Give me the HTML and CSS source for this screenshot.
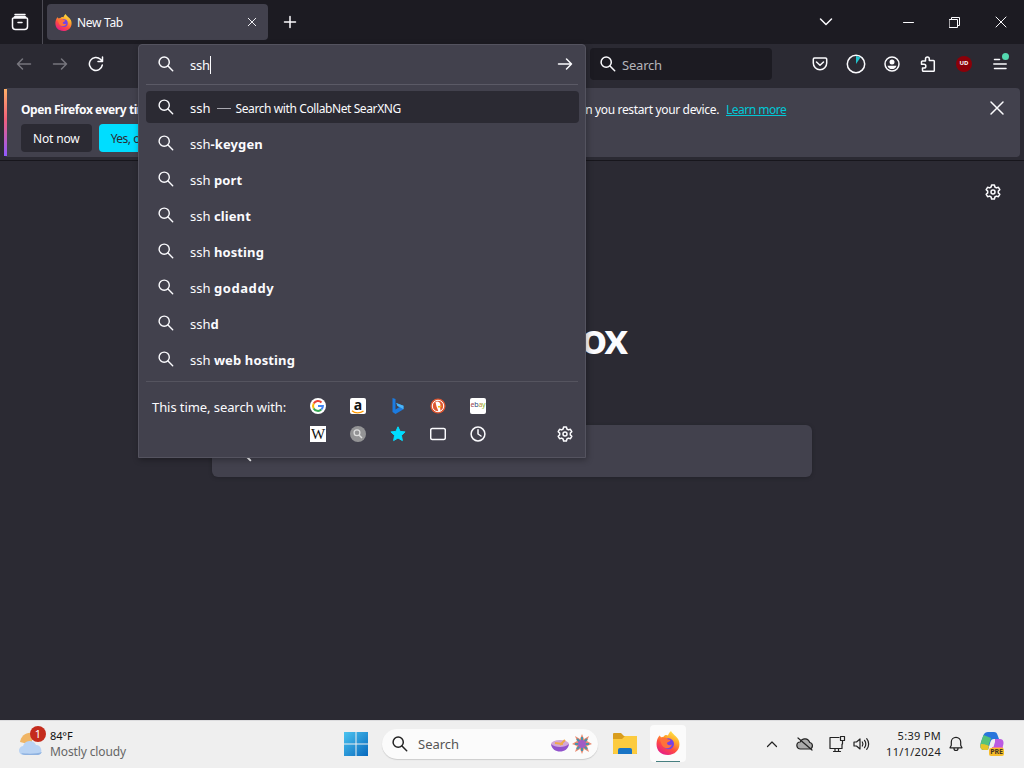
FILE: index.html
```html
<!DOCTYPE html>
<html lang="en">
<head>
    <meta charset="utf-8">
    <title>New Tab</title>
    <link rel="stylesheet" href="styles.css">
</head>
<body>
    <svg class="defs" width="0" height="0">
        <symbol id="search" viewBox="0 0 16 16"><circle cx="6.2" cy="6.2" r="5.100"/><path d="M10 10l4.700 4.700"/></symbol>
        <symbol id="close" viewBox="0 0 16 16"><path d="M2 2l12 12M14 2L2 14"/></symbol>
        <symbol id="arrow" viewBox="0 0 16 16"><path d="M1.500 8h13M9.500 3L14.500 8l-5 5"/></symbol>
        <symbol id="gear" viewBox="0 0 16 16"><path d="M6.600 1h2.800l.5 2 1.500.9 2-.6 1.400 2.400L13.300 7.100v1.800l1.500 1.400-1.400 2.400-2-.6-1.500.9-.5 2H6.600l-.5-2-1.500-.9-2 .6-1.400-2.400 1.500-1.400V7.100L1.200 5.700l1.400-2.400 2 .6L6.100 3z"/><circle cx="8" cy="8" r="2"/></symbol>
        <symbol id="firefox" viewBox="0 0 24 24">
            <linearGradient id="flame" x1=".8" y1="0" x2=".25" y2="1">
                <stop offset="0" stop-color="#fff04a"/><stop offset=".35" stop-color="#ffa52b"/><stop offset=".65" stop-color="#ff4a43"/><stop offset="1" stop-color="#e4198b"/>
            </linearGradient>
            <path fill="url(#flame)" stroke="none" d="M15 0c1 3 6 5 7.700 9.200C25.500 17 20 24 12 24S-.4 18.500.7 11c.3-3 1.500-5 3-6.500L5 6.200l2.500-.4C9 3.500 11 4 12 4.500 12.500 2.800 13.500 1 15 0z"/>
            <circle cx="12.500" cy="12.800" r="5.500" fill="#7542e5" stroke="none"/>
            <path fill="#ff7139" stroke="none" d="M4 9c2-3 6-2.500 7.500-.8l3 .8c-.5 2-3 1.800-3.500 3 0 2 2.500 3 5 1.500-1 4-6 5-9 2C5 13.500 5 11 4 9z"/>
        </symbol>
    </svg>

    <div class="tabbar">
        <div class="tab-view">
            <svg class="icon" width="18" height="18" viewBox="0 0 18 18"><path d="M4 1.500h10M2.500 5h13a1 1 0 0 1 1 1v7.500a3 3 0 0 1-3 3h-9a3 3 0 0 1-3-3V6a1 1 0 0 1 1-1zM3 4.500l1-1h10l1 1M7 9.500h4"/></svg>
        </div>
        <div class="tab">
            <svg width="17" height="17"><use href="#firefox"/></svg>
            <span class="tab-title">New Tab</span>
            <svg class="icon" width="10" height="10"><use href="#close"/></svg>
        </div>
        <svg class="icon new-tab" width="14" height="14" viewBox="0 0 14 14"><path d="M7 1.500v11M1.500 7h11"/></svg>
        <div class="window-buttons">
            <svg class="icon" width="14" height="10" viewBox="0 0 14 10"><path d="M1.500 2L7 7.500 12.500 2"/></svg>
            <svg class="icon thin minimize" width="11" height="11" viewBox="0 0 11 11"><path d="M.5 5.500h10"/></svg>
            <svg class="icon thin" width="11" height="11" viewBox="0 0 11 11"><path d="M.5 2.500h8v8h-8zM2.500 2.500v-2h8v8h-2"/></svg>
            <svg class="icon thin" width="12" height="12" viewBox="0 0 12 12"><path d="M1 1l10 10M11 1L1 11"/></svg>
        </div>
    </div>

    <div class="navbar">
        <svg class="icon disabled back" width="16" height="16"><use href="#arrow"/></svg>
        <svg class="icon disabled" width="16" height="16"><use href="#arrow"/></svg>
        <svg class="icon" width="16" height="16" viewBox="0 0 16 16"><path d="M14.300 9A6.500 6.500 0 1 1 12.500 3.300L14 5M14.500 1v4.500H10"/></svg>
        <div class="searchbar">
            <svg class="icon" width="16" height="16"><use href="#search"/></svg>
            <span>Search</span>
        </div>
        <div class="toolbar">
            <svg class="icon" width="16" height="16" viewBox="0 0 16 16"><path d="M2.500 2h11a1.200 1.200 0 0 1 1.200 1.200V7a6.700 6.700 0 0 1-13.400 0V3.200A1.200 1.200 0 0 1 2.500 2zM4.500 6L8 9.300 11.500 6"/></svg>
            <svg class="icon" width="20" height="20" viewBox="0 0 20 20"><circle cx="10" cy="10" r="8.700"/><path class="teal" d="M10 10V2a8 8 0 0 1 4.500 1.500z"/></svg>
            <svg class="icon" width="16" height="16" viewBox="0 0 16 16"><circle cx="8" cy="8" r="7"/><circle class="solid" cx="8" cy="6" r="2.500"/><path class="solid" d="M3.500 9.700h9c-1 4.500-8 4.500-9 0z"/></svg>
            <svg class="icon" width="16" height="16" viewBox="0 0 16 16"><path d="M5.500 4V3a1.900 1.900 0 0 1 3.800 0v1.500h4.200a.8.800 0 0 1 .8.800v9.200a.8.800 0 0 1-.8.800h-10a1 1 0 0 1-1-1V12H4a1.800 1.800 0 0 0 0-3.700H1.500V6a1 1 0 0 1 1-1h3z"/></svg>
            <span class="ublock">UD</span>
            <span class="menu">
                <svg class="icon" width="14" height="14" viewBox="0 0 14 14"><path d="M1.500 2.500h5M.8 7h12.400M1.500 11.500h11.500"/></svg>
                <span class="menu-badge"></span>
            </span>
        </div>

        <div class="urlbar">
            <div class="urlbar-input">
                <svg class="icon" width="16" height="16"><use href="#search"/></svg>
                <span class="typed">ssh</span>
                <svg class="icon go" width="16" height="16"><use href="#arrow"/></svg>
            </div>
            <div class="results">
                <div class="result selected"><svg class="icon" width="16" height="16"><use href="#search"/></svg><span>ssh</span><span class="engine"><i class="dash"></i>Search with CollabNet SearXNG</span></div>
                <div class="result"><svg class="icon" width="16" height="16"><use href="#search"/></svg><span>ssh<b>-keygen</b></span></div>
                <div class="result"><svg class="icon" width="16" height="16"><use href="#search"/></svg><span>ssh <b>port</b></span></div>
                <div class="result"><svg class="icon" width="16" height="16"><use href="#search"/></svg><span>ssh <b>client</b></span></div>
                <div class="result"><svg class="icon" width="16" height="16"><use href="#search"/></svg><span>ssh <b>hosting</b></span></div>
                <div class="result"><svg class="icon" width="16" height="16"><use href="#search"/></svg><span>ssh <b class="wide">godaddy</b></span></div>
                <div class="result"><svg class="icon" width="16" height="16"><use href="#search"/></svg><span>ssh<b>d</b></span></div>
                <div class="result"><svg class="icon" width="16" height="16"><use href="#search"/></svg><span>ssh <b>web hosting</b></span></div>
            </div>
            <div class="one-offs">
                <span class="one-offs-label">This time, search with:</span>
                <div class="engines">
                    <svg width="16" height="16" viewBox="0 0 16 16"><circle cx="8" cy="8" r="8" fill="#fff"/><g fill="none" stroke-width="2"><path stroke="#ea4335" d="M3.700 5.600A4.900 4.900 0 0 1 11.500 4.500"/><path stroke="#fbbc05" d="M3.700 5.600a4.900 4.900 0 0 0 0 4.800"/><path stroke="#34a853" d="M3.700 10.400a4.900 4.900 0 0 0 7.600 1.200"/><path stroke="#4285f4" d="M11.300 11.600A4.900 4.900 0 0 0 12.900 8H8"/></g></svg>
                    <span class="engine-tile amazon">a<svg width="14" height="4" viewBox="0 0 14 4"><path d="M1 .8c3 2.700 8 2.700 11.500.2" fill="none" stroke="#f90" stroke-width="1.400"/></svg></span>
                    <svg width="16" height="16" viewBox="0 0 16 16"><path fill="#1b7be0" d="M2.500 0l3 1v10.500L9.500 9 7.500 8 6.200 5l7.300 2.700v3.500L5.500 16l-3-2z"/><path fill="#4bb5f5" d="M6.200 5l7.300 2.700v3.500L9.500 9l-2-1z"/></svg>
                    <svg width="16" height="16" viewBox="0 0 16 16"><circle cx="8" cy="8" r="7.600" fill="#de5833"/><circle cx="8" cy="8" r="5.700" fill="none" stroke="#fff" stroke-width="1"/><path fill="#fff" d="M5.500 4c2-1.500 5 0 5 3l-.5 1.500.5 4.500-2 .5-2-5z"/><path fill="#fdb913" d="M8 8l4-.2-1.500 1.700H8z"/></svg>
                    <span class="engine-tile ebay"><i class="r">e</i><i class="b">b</i><i class="y">a</i><i class="g">y</i></span>
                    <span class="engine-tile wiki">W</span>
                    <svg width="16" height="16" viewBox="0 0 16 16"><circle cx="8" cy="8" r="8" fill="#939395"/><circle cx="7" cy="6.800" r="2.900" fill="none" stroke="#ddd" stroke-width="1.300"/><path d="M9 9l3 3" stroke="#ddd" stroke-width="1.500"/></svg>
                    <svg width="16" height="16" viewBox="0 0 16 16"><path fill="#00ddff" stroke="#00ddff" stroke-linejoin="round" d="M8 .8l2.100 4.600 5 .5-3.700 3.500 1 5.200L8 12l-4.400 2.600 1-5.200L.9 5.900l5-.5z"/></svg>
                    <svg class="icon" width="16" height="16" viewBox="0 0 16 16"><rect x=".7" y="2.500" width="14.600" height="11" rx="1.500"/></svg>
                    <svg class="icon" width="16" height="16" viewBox="0 0 16 16"><circle cx="8" cy="8" r="6.900"/><path d="M8 3.800V8l3 2"/></svg>
                </div>
                <svg class="icon settings" width="16" height="16"><use href="#gear"/></svg>
            </div>
        </div>
    </div>

    <div class="notification">
        <div class="notification-text">
            <b>Open Firefox every time you restart your computer?</b>
            <span>Open automatically when you restart your device.</span>
            <a class="learn-more">Learn more</a>
            <svg class="icon notification-close" width="16" height="16"><use href="#close"/></svg>
        </div>
        <div class="notification-buttons">
            <span class="button">Not now</span>
            <span class="button primary">Yes, open Firefox</span>
        </div>
    </div>

    <div class="page">
        <svg class="icon page-settings" width="16" height="16"><use href="#gear"/></svg>
        <div class="wordmark">Firefox</div>
        <div class="page-search"><svg class="icon" width="20" height="20"><use href="#search"/></svg></div>
    </div>

    <div class="taskbar">
        <div class="weather">
            <span class="weather-icon">
                <svg width="26" height="30" viewBox="0 0 26 30"><path d="M2 14C3 8 8 4 14 5v12z" fill="#f0b565"/><path d="M6 27a4.500 4.500 0 0 1-1-9 7 7 0 0 1 13-1 5.500 5.500 0 0 1 3 10z" fill="#b9d3f3"/><path d="M3 25a5 5 0 0 0 4 2h13a5 5 0 0 0 4-3c-5 2-15 2-21 1z" fill="#8fb2e0"/></svg>
                <span class="weather-badge">1</span>
            </span>
            <div class="weather-text"><span class="temp">84°F</span><span>Mostly cloudy</span></div>
        </div>
        <div class="taskbar-apps">
            <svg width="24" height="24" viewBox="0 0 24 24">
                <linearGradient id="win" x1="0" y1="0" x2="1" y2="1"><stop offset="0" stop-color="#4cc4f0"/><stop offset="1" stop-color="#0768bd"/></linearGradient>
                <path fill="url(#win)" d="M0 0h11.500v11.500H0zM12.500 0H24v11.500H12.500zM0 12.500h11.500V24H0zM12.500 12.500H24V24H12.500z"/>
            </svg>
            <div class="taskbar-search">
                <svg class="icon" width="16" height="16"><use href="#search"/></svg>
                <span>Search</span>
                <svg class="doodle" width="42" height="22" viewBox="0 0 42 22">
                    <ellipse cx="10" cy="11" rx="9" ry="4" fill="#d3a8d8"/><path d="M1 11c1 10 17 10 18 0-4 4-14 4-18 0z" fill="#9152cc"/><path d="M5 10l8 1M10 12l5-5" stroke="#efaa4c" stroke-width="2"/>
                    <path d="M32 1l2 5 5-3-2 5 5 3-5 2 2 6-5-3-2 5-2-5-5 3 2-6-5-2 5-3-2-5 5 3z" fill="#e98a70"/><path d="M32 4v14M25 11h14M27 6l10 10M37 6L27 16" stroke="#4a93a8" stroke-width="2"/><circle cx="32" cy="11" r="4" fill="#a05cc4"/>
                </svg>
            </div>
            <svg class="explorer" width="24" height="22" viewBox="0 0 24 22"><path d="M0 1a1 1 0 0 1 1-1h7l3 3h12a1 1 0 0 1 1 1v17H0z" fill="#d99d1e"/><path d="M0 6h9l3-3h12v17a1 1 0 0 1-1 1H1a1 1 0 0 1-1-1z" fill="#fccb3f"/><path d="M5 21v-4a2 2 0 0 1 2-2h10a2 2 0 0 1 2 2v4z" fill="#1974c5"/></svg>
            <span class="running"><svg width="24" height="24"><use href="#firefox"/></svg></span>
        </div>
        <div class="tray">
            <svg class="icon" width="12" height="12" viewBox="0 0 12 12"><path d="M1.500 8.500L6 4l4.500 4.500"/></svg>
            <svg class="icon cloud" width="18" height="16" viewBox="0 0 18 16"><path fill="#aaa" d="M4.500 13a3.500 3.500 0 0 1-.3-7 5 5 0 0 1 9.500.5 3.300 3.300 0 0 1 0 6.500z"/><path d="M2 2l14 12"/></svg>
            <svg class="icon network" width="18" height="18" viewBox="0 0 18 18"><path d="M11 2.500H2v11h12V9M5.500 16.500h7M7 13.500v3M10.500 13.500v3M12.500 1.500h4v4h-4zM14.500 5.500V9"/></svg>
            <svg class="icon sound" width="17" height="14" viewBox="0 0 17 14"><path d="M1 5h2.500L7 2v10L3.500 9H1zM9.300 5c.8 1.200.8 2.800 0 4M11.500 3.300c1.700 2 1.700 5.400 0 7.400M13.700 1.700c2.600 3 2.600 7.600 0 10.600"/></svg>
            <div class="clock"><span>5:39 PM</span><span>11/1/2024</span></div>
            <svg class="icon bell" width="14" height="16" viewBox="0 0 14 16"><path d="M1 11.800l1.300-2.500V6a4.700 4.700 0 0 1 9.400 0v3.300L13 11.800zM5 12.500a2 2 0 0 0 4 0"/></svg>
            <span class="copilot">
                <svg width="24" height="23" viewBox="0 0 24 23"><path d="M8 0h6c2 0 3 1 3.500 3L19 7h-5c-2 0-3 1-3.600 3L8 18H4c-4 0-4-4-3-8L3.500 3C4.300 1 6 0 8 0z" fill="#2876dc"/><path d="M3.500 3L1 10c-1 4-1 8 3 8h3L11 6z" fill="#54c27b"/><path d="M4 18c-4 0-4-4-3-6 3 0 7 1 8 2l-1 4z" fill="#e3c52b"/><path d="M15 7h5c4 0 4 4 3 7l-2 6c-1 2-2 3-4 3h-6l4-13z" fill="#ba5be2"/><path d="M12 15h11l-2 6-10 2z" fill="#f37992"/></svg>
                <span class="pre">PRE</span>
            </span>
        </div>
    </div>
</body>
</html>
```

FILE: styles.css
```css
* {
    box-sizing: border-box;
}
body {
    margin: 0;
    height: 768px;
    display: flex;
    flex-direction: column;
    overflow: hidden;
    background: #2b2a33;
    color: #fbfbfe;
    font: 12px "Noto Sans", "Open Sans", sans-serif;
}
svg {
    flex: none;
    display: block;
}
.defs {
    position: absolute;
}
i {
    font-style: normal;
}
.icon {
    fill: none;
    stroke: currentColor;
    stroke-width: 1.5;
    stroke-linecap: round;
    stroke-linejoin: round;
}
.thin {
    stroke-width: 1;
}

/* tabs */
.tabbar {
    display: flex;
    align-items: center;
    flex: none;
    height: 44px;
    background: #1c1b22;
}
.tab-view {
    width: 43px;
    height: 44px;
    padding: 13px 0 0 11px;
    border-right: 1px solid #4d4c55;
}
.tab {
    display: flex;
    align-items: center;
    width: 221px;
    height: 36px;
    margin-left: 4px;
    padding: 0 11px 0 8px;
    border-radius: 4px;
    background: #42414d;
}
.tab-title {
    flex: 1;
    margin: 1px 0 0 5px;
    letter-spacing: -0.3px;
}
.new-tab {
    margin-left: 15px;
}
.window-buttons {
    display: flex;
    align-items: center;
    margin-left: auto;
    padding-right: 17px;
    gap: 35px;
}
.minimize {
    margin-left: 35px;
}

/* navigation toolbar */
.navbar {
    position: relative;
    display: flex;
    align-items: center;
    flex: none;
    height: 44px;
    padding: 0 16px;
    padding-bottom: 4px;
    gap: 20px;
    background: #2b2a33;
}
.disabled {
    color: #77767e;
}
.back {
    transform: scaleX(-1);
}
.searchbar {
    display: flex;
    align-items: center;
    gap: 6px;
    width: 182px;
    height: 32px;
    margin-left: 466px;
    padding-left: 10px;
    border-radius: 4px;
    background: #1c1b22;
    color: #b5b5ba;
    font-size: 13px;
}
.searchbar span {
    padding-top: 1px;
    letter-spacing: -0.2px;
}
.searchbar .icon {
    color: #fbfbfe;
}
.toolbar {
    display: flex;
    align-items: center;
    gap: 20px;
    margin-left: 20px;
}
.toolbar > :nth-child(2) {
    margin: 0 -2px;
}
.ublock {
    width: 16px;
    height: 16px;
    border-radius: 50%;
    background: #8b0009;
    font-size: 6px;
    font-weight: bold;
    line-height: 15px;
    text-align: center;
}
.teal {
    fill: #22c2cc;
    stroke: none;
}
.solid {
    fill: currentColor;
    stroke: none;
}
.menu {
    position: relative;
    margin-left: 1px;
}
.menu-badge {
    position: absolute;
    top: -4px;
    right: -2px;
    width: 7px;
    height: 7px;
    border-radius: 50%;
    background: #54d9b0;
}
.navbar > .searchbar,
.navbar > .toolbar {
    flex: none;
}

/* address bar popup */
.urlbar {
    position: absolute;
    z-index: 2;
    top: 0;
    left: 138px;
    width: 448px;
    height: 414px;
    border: 1px solid #54535f;
    border-radius: 4px 4px 0 0;
    background: #42414d;
    box-shadow: 1px 2px 6px rgba(0, 0, 0, 0.3);
    font-size: 13px;
}
.urlbar-input {
    display: flex;
    align-items: center;
    height: 40px;
    margin: 0 7px;
    padding: 0 5px 1px 12px;
    border-bottom: 1px solid #5b5a66;
}
.typed {
    margin: 1px 0 0 16px;
    border-right: 1px solid #fbfbfe;
    line-height: 18px;
    letter-spacing: -0.2px;
}
.go {
    margin-left: auto;
}
.results {
    margin: 6px 6px 0 7px;
}
.result {
    display: flex;
    align-items: center;
    gap: 16px;
    height: 32px;
    margin-bottom: 4px;
    padding: 2px 0 0 12px;
    border-radius: 4px;
}
.result .icon {
    margin-bottom: 2px;
}
.result > .icon {
    stroke-width: 1.4;
}
.result b {
    letter-spacing: 0.12px;
}
.result .wide {
    letter-spacing: 0.6px;
}
.selected {
    background: #2b2a33;
}
.engine {
    display: flex;
    align-items: center;
    margin-left: -10px;
    font-size: 12px;
    letter-spacing: -0.4px;
}
.dash {
    width: 14px;
    height: 1px;
    margin-right: 5px;
    background: #a9a8b0;
}
.one-offs {
    display: flex;
    height: 76px;
    margin: 6px 7px 0;
    padding: 16px 5px 0 6px;
    border-top: 1px solid #55545f;
}
.one-offs-label {
    width: 158px;
    line-height: 18px;
    letter-spacing: -0.08px;
}
.engines {
    display: grid;
    grid-template-columns: repeat(5, 16px);
    grid-auto-rows: 16px;
    gap: 12px 24px;
}
.engine-tile {
    display: flex;
    justify-content: center;
    width: 16px;
    height: 16px;
    border-radius: 2px;
    background: #fff;
    color: #111;
}
.amazon {
    flex-direction: column;
    align-items: center;
    font-size: 14px;
    font-weight: bold;
    line-height: 11px;
}
.ebay {
    font-size: 7px;
    line-height: 14px;
    letter-spacing: -0.2px;
}
.r { color: #a3444c; }
.b { color: #2a4a7d; }
.y { color: #b99232; }
.g { color: #86b817; }
.wiki {
    border-radius: 0;
    font: 15px/16px "Liberation Serif", serif;
}
.settings {
    margin: 28px 0 0 auto;
}

/* notification bar */
.notification {
    flex: none;
    height: 69px;
    margin: 0 4px 3px;
    padding: 11px 14px 0 14px;
    border: 1px solid #4e4d59;
    border-left: 3px solid;
    border-image: linear-gradient(#ffb067, #f0607a 45%, #9059ff) 0 0 0 3;
    border-radius: 4px;
    background: #42414d;
}
.notification-text {
    display: flex;
    align-items: center;
    height: 18px;
}
.notification-text span {
    width: 387px;
    text-align: right;
    white-space: nowrap;
    letter-spacing: -0.35px;
}
.notification-text b {
    width: 311px;
    white-space: nowrap;
    letter-spacing: -0.42px;
}
.learn-more {
    margin-left: 7px;
    color: #00c8d7;
    text-decoration: underline;
    letter-spacing: -0.5px;
}
.notification-close {
    margin: -2px 0 0 auto;
}
.notification-buttons {
    display: flex;
    gap: 7px;
    margin-top: 6px;
}
.button {
    height: 28px;
    padding: 0 12px;
    border-radius: 4px;
    background: #2b2a33;
    line-height: 30px;
    letter-spacing: -0.15px;
}
.primary {
    background: #00ddff;
    color: #2b2a33;
    letter-spacing: -0.5px;
}

/* new tab page */
.page {
    display: flex;
    flex-direction: column;
    flex: 1;
    border-top: 1px solid #17161c;
    background: #2b2a33;
}
.page-settings {
    align-self: flex-end;
    margin: 23px 23px 0 0;
}
.wordmark {
    width: 627px;
    margin-top: 112px;
    text-align: right;
    font: 900 44px/50px Lato, sans-serif;
    letter-spacing: -1px;
}
.page-search {
    width: 600px;
    height: 52px;
    margin: 63px 0 0 212px;
    padding: 17px 0 0 20px;
    border-radius: 6px;
    background: #42414d;
    box-shadow: 0 1px 4px rgba(0, 0, 0, 0.2);
}

/* taskbar */
.taskbar {
    display: flex;
    align-items: center;
    flex: none;
    height: 48px;
    padding-bottom: 2px;
    border-top: 1px solid #dcdcde;
    background: #efefef;
    color: #222;
}
.weather {
    display: flex;
    width: 344px;
    padding-left: 18px;
}
.weather-icon {
    position: relative;
    width: 32px;
}
.weather-badge {
    position: absolute;
    top: -2px;
    left: 12px;
    width: 16px;
    height: 16px;
    border-radius: 50%;
    background: #c42b1c;
    color: #fff;
    font-size: 11px;
    line-height: 16px;
    text-align: center;
}
.weather-text,
.clock {
    display: flex;
    flex-direction: column;
    line-height: 16px;
}
.weather-text {
    color: #666;
    letter-spacing: -0.12px;
}
.temp {
    color: #111;
    font-size: 11px;
}
.taskbar-apps {
    display: flex;
    align-items: center;
    flex: 1;
}
.taskbar-search {
    display: flex;
    align-items: center;
    width: 216px;
    height: 30px;
    margin-left: 14px;
    padding: 0 6px 0 10px;
    border-radius: 15px;
    background: #fbfbfb;
    box-shadow: 0 1px 1px #ccc;
    color: #555;
    font-size: 13px;
}
.taskbar-search .icon {
    margin-right: 10px;
    color: #222;
}
.doodle {
    margin-left: auto;
}
.explorer {
    margin-left: 15px;
}
.running {
    width: 36px;
    height: 37px;
    margin-left: 13px;
    padding: 6px;
    border-radius: 4px;
    background: linear-gradient(#477f80, #477f80) center bottom / 24px 1px no-repeat #fbfbfb;
}
.tray {
    display: flex;
    align-items: center;
    padding-right: 20px;
}
.tray .icon {
    stroke-width: 1.2;
}
.cloud {
    margin-left: 18px;
}
.network {
    margin-left: 14px;
}
.sound {
    margin-left: 7px;
}
.clock {
    width: 71px;
    text-align: right;
    font-size: 11px;
    letter-spacing: 0.3px;
}
.bell {
    margin-left: 8px;
}
.copilot {
    position: relative;
    margin-left: 17px;
}
.pre {
    position: absolute;
    right: 0;
    bottom: -1px;
    padding: 0 1px;
    border-radius: 2px;
    background: #f7bd2b;
    color: #432;
    font-size: 7px;
    font-weight: bold;
    line-height: 8px;
}
```
